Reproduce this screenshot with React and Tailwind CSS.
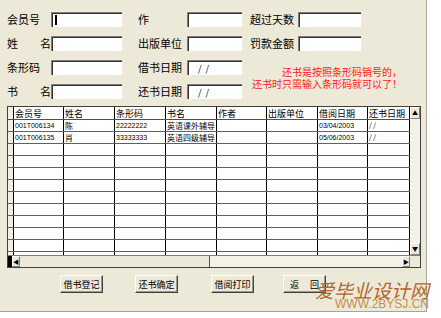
import React from "react";

const cjk = { fontFamily: "'Noto Sans CJK SC', 'Liberation Sans', sans-serif" };

const Field = ({ label, spread, w, children }) => (
  <div className="flex items-center h-[15px]">
    <div className={`text-[11px] leading-none text-black flex ${spread ? "justify-between" : ""}`} style={{ width: w }}>
      {spread ? label.split("").map((c, i) => <span key={i}>{c}</span>) : label}
    </div>
    {children}
  </div>
);

const Input = ({ w, children }) => (
  <div
    className="h-[15px] bg-white border-t border-l border-[#808080] border-r-white border-b-white shadow-[inset_1px_1px_0_#303030] flex items-center pl-[3px] text-[9px] leading-none"
    style={{ width: w }}
  >
    {children}
  </div>
);

const cols = [
  { t: "会员号", w: "w-[50px]" },
  { t: "姓名", w: "w-[51px]" },
  { t: "条形码", w: "w-[51px]" },
  { t: "书名", w: "w-[51px]" },
  { t: "作者", w: "w-[50px]" },
  { t: "出版单位", w: "w-[51px]" },
  { t: "借阅日期", w: "w-[50px]" },
  { t: "还书日期", w: "w-[42px]" },
];

const rows = [
  ["001T006134", "陈", "22222222", "英语课外辅导", "", "", "03/04/2003", "/   /"],
  ["001T006135", "肖", "33333333", "英语四级辅导", "", "", "05/06/2003", "/   /"],
  ...Array.from({ length: 10 }, () => ["", "", "", "", "", "", "", ""]),
];

const Btn = ({ children, className }) => (
  <div
    className={`w-[43px] h-[18px] bg-[#ece9d8] border-t border-l border-white border-r border-b border-r-[#404040] border-b-[#404040] shadow-[inset_-1px_-1px_0_#9c9a8e] flex items-center justify-center text-[9px] leading-none text-black whitespace-nowrap ${className}`}
  >
    {children}
  </div>
);

const ArrowBox = ({ children, className }) => (
  <div
    className={`bg-[#ece9d8] border-t border-l border-white border-r border-b border-r-[#808080] border-b-[#808080] flex items-center justify-center text-[6px] leading-none text-black ${className}`}
  >
    {children}
  </div>
);

export default function App() {
  return (
    <div className="relative w-[441px] h-[318px] bg-white overflow-hidden" style={cjk}>
      <div className="w-[427px] h-[312px] bg-[#ece9d8] border-r border-b border-[#a8a69a] pt-[12px]">
        {/* form */}
        <div className="flex h-[87px]">
          <div className="ml-[7px] flex flex-col gap-[9px]">
            <Field label="会员号" w="44px">
              <Input w="71px">
                <span className="w-[2px] h-[10px] bg-black" />
              </Input>
            </Field>
            <Field label="姓名" spread w="44px">
              <Input w="71px" />
            </Field>
            <Field label="条形码" w="44px">
              <Input w="71px" />
            </Field>
            <Field label="书名" spread w="44px">
              <Input w="71px" />
            </Field>
          </div>
          <div className="ml-[16px] flex flex-col gap-[9px]">
            <Field label="作" w="49px">
              <Input w="55px" />
            </Field>
            <Field label="出版单位" w="49px">
              <Input w="55px" />
            </Field>
            <Field label="借书日期" w="49px">
              <Input w="55px">
                <span className="ml-[7px]">/&nbsp;&nbsp;/</span>
              </Input>
            </Field>
            <Field label="还书日期" w="49px">
              <Input w="55px">
                <span className="ml-[7px]">/&nbsp;&nbsp;/</span>
              </Input>
            </Field>
          </div>
          <div className="ml-[8px] flex flex-col gap-[9px]">
            <Field label="超过天数" w="48px">
              <Input w="63px" />
            </Field>
            <Field label="罚款金额" w="48px">
              <Input w="63px" />
            </Field>
            <div className="w-[152px] mt-[6px] text-right text-[10px] leading-[12px] text-[#ff2020]">
              <div>还书是按照条形码销号的，</div>
              <div>还书时只需输入条形码就可以了！</div>
            </div>
          </div>
        </div>

        {/* grid */}
        <div className="ml-[7px] mt-[7px] w-[414px] h-[162px] border border-[#404040] bg-white flex flex-col">
          <div className="flex h-[148px]">
            <div className="w-[402px] h-[148px] overflow-hidden">
              <div className="flex h-[13px] border-b border-[#505050]">
                <div className="w-[6px] bg-[#f1efe4] border-r border-black" />
                {cols.map((c, i) => (
                  <div key={i} className={`${c.w} border-r border-black text-[9px] leading-[13px] pl-[1px] text-black whitespace-nowrap overflow-hidden`}>
                    {c.t}
                  </div>
                ))}
              </div>
              {rows.map((r, ri) => (
                <div key={ri} className="flex h-[12px] border-b border-[#606060]">
                  <div className="w-[6px] bg-[#f1efe4] border-r border-black" />
                  {r.map((v, i) => (
                    <div
                      key={i}
                      className={`${cols[i].w} border-r border-black leading-[11px] pl-[1px] text-black whitespace-nowrap overflow-hidden ${i === 1 || i === 3 ? "text-[8px]" : "text-[7px]"}`}
                      style={i === 0 || i === 2 || i === 6 ? { fontFamily: "'Liberation Sans', sans-serif" } : undefined}
                    >
                      {v}
                    </div>
                  ))}
                </div>
              ))}
            </div>
            <div className="w-[10px] h-[148px] bg-[#f3f1e8] flex flex-col justify-between">
              <ArrowBox className="w-[10px] h-[12px]">▲</ArrowBox>
              <ArrowBox className="w-[10px] h-[12px] text-[#a0a0a0]">▼</ArrowBox>
            </div>
          </div>
          <div className="flex h-[12px] border-t border-[#808080]">
            <div className="w-[4px] bg-black" />
            <ArrowBox className="w-[8px] h-[11px]">◀</ArrowBox>
            <div className="w-[190px] h-[11px] bg-[#ece9d8] border-r border-[#505050]" />
            <div className="flex-1 h-[11px] bg-[#f3f1e8]" />
            <ArrowBox className="w-[8px] h-[11px]">▶</ArrowBox>
            <div className="w-[10px] h-[11px] bg-[#ece9d8]" />
          </div>
        </div>

        {/* buttons */}
        <div className="flex mt-[7px]">
          <Btn className="ml-[60px]">借书登记</Btn>
          <Btn className="ml-[32px]">还书确定</Btn>
          <Btn className="ml-[33px]">借阅打印</Btn>
          <Btn className="ml-[29px] justify-start pl-[6px]">
            返<span className="ml-[11px]">回</span>
          </Btn>
        </div>
      </div>

      {/* watermark */}
      <div className="absolute left-[315px] top-[279px] text-[19px] leading-[22px] italic text-[#b0672a]" style={cjk}>
        爱毕业设计网
      </div>
      <div
        className="absolute left-[335px] top-[298px] text-[12px] leading-[13px] text-[#c98c4f]"
        style={{ fontFamily: "'Liberation Sans', sans-serif" }}
      >
        WWW.2BYSJ.CN
      </div>
    </div>
  );
}
